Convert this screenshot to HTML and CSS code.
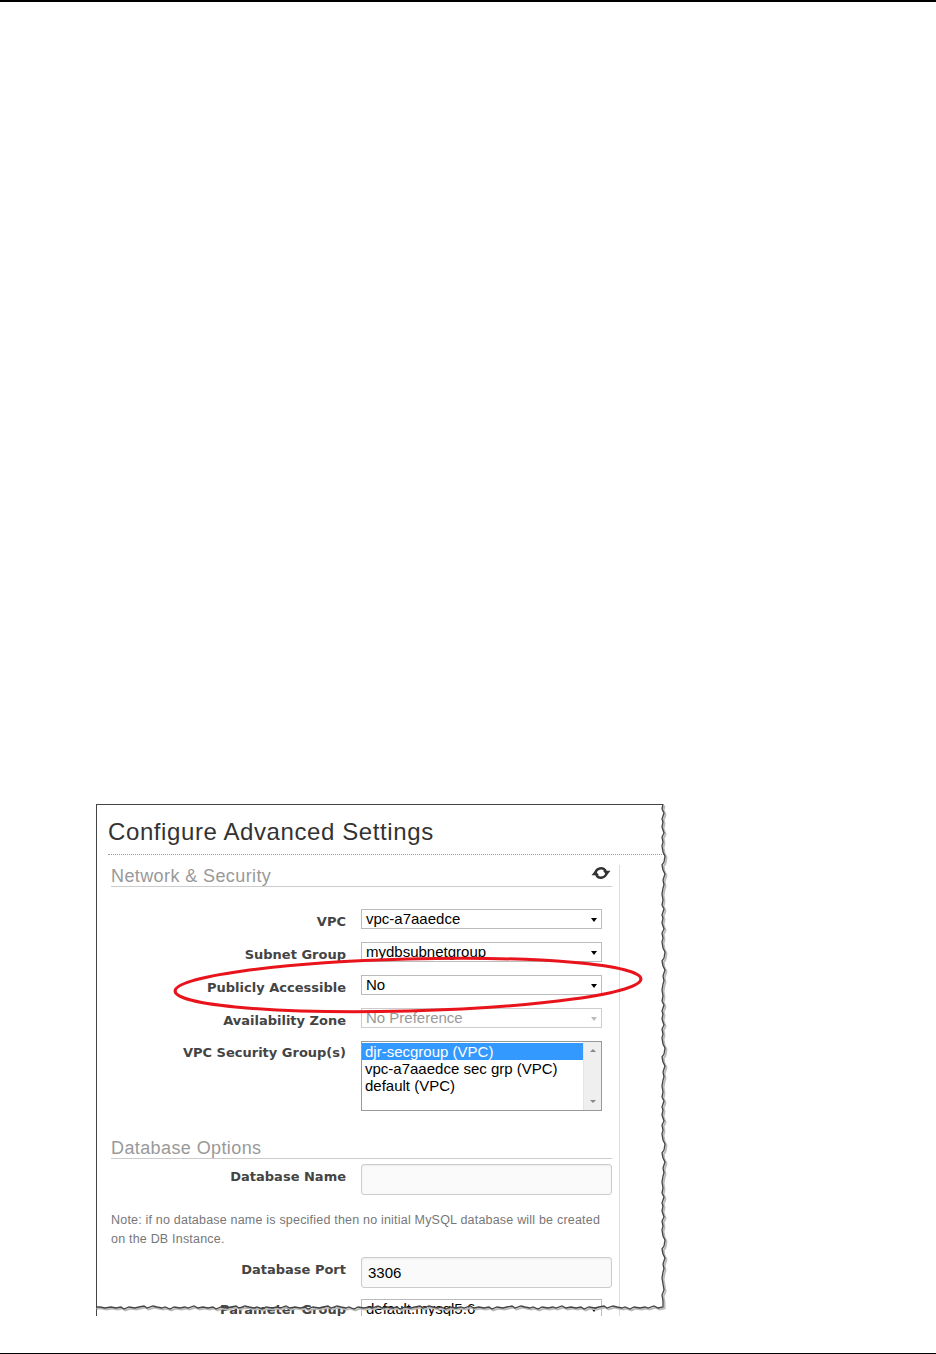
FILE: index.html
```html
<!DOCTYPE html>
<html lang="en">
<head>
    <meta charset="UTF-8">
    <meta name="viewport" content="width=device-width, initial-scale=1.0">
    <title>Configure Advanced Settings</title>
    <link rel="stylesheet" href="styles.css">
</head>
<body>
    <div class="page">
        <div class="rule rule-top"></div>

        <!-- screenshot of the console form -->
        <div class="shot">
            <div class="frame">
                <h1 class="frame-title">Configure Advanced Settings</h1>

                <div class="panel">
                    <div class="section-head">
                        <span>Network &amp; Security</span>
                        <svg class="refresh" viewBox="0 0 20 14">
                            <path d="M4.5 7.5 A5.5 5.5 0 0 1 14.8 5.2" fill="none" stroke="#333" stroke-width="2.4"/>
                            <polygon points="12,4.8 19.5,4.8 15.7,9.6" fill="#333"/>
                            <path d="M15.5 6.5 A5.5 5.5 0 0 1 5.2 8.8" fill="none" stroke="#333" stroke-width="2.4"/>
                            <polygon points="0.5,9.2 8,9.2 4.3,4.4" fill="#333"/>
                        </svg>
                    </div>

                    <div class="form-row first">
                        <label class="field-label">VPC</label>
                        <div class="select"><span>vpc-a7aaedce</span><i class="caret"></i></div>
                    </div>
                    <div class="form-row">
                        <label class="field-label">Subnet Group</label>
                        <div class="select"><span>mydbsubnetgroup</span><i class="caret"></i></div>
                    </div>
                    <div class="form-row">
                        <label class="field-label">Publicly Accessible</label>
                        <div class="select"><span>No</span><i class="caret"></i></div>
                    </div>
                    <div class="form-row">
                        <label class="field-label">Availability Zone</label>
                        <div class="select disabled"><span>No Preference</span><i class="caret"></i></div>
                    </div>
                    <div class="form-row">
                        <label class="field-label list-label">VPC Security Group(s)</label>
                        <div class="listbox">
                            <ul class="options">
                                <li class="selected">djr-secgroup (VPC)</li>
                                <li>vpc-a7aaedce sec grp (VPC)</li>
                                <li>default (VPC)</li>
                            </ul>
                            <div class="scrollbar">
                                <i class="scroll-up"></i>
                                <i class="scroll-down"></i>
                            </div>
                        </div>
                    </div>

                    <div class="section-head db-head">
                        <span>Database Options</span>
                    </div>

                    <div class="form-row name-row">
                        <label class="field-label">Database Name</label>
                        <div class="text-input"></div>
                    </div>
                    <p class="note">Note: if no database name is specified then no initial MySQL database will be created<br>on the DB Instance.</p>
                    <div class="form-row port-row">
                        <label class="field-label">Database Port</label>
                        <div class="text-input">3306</div>
                    </div>
                    <div class="form-row param-row">
                        <label class="field-label param-label">Parameter Group</label>
                        <div class="select"><span>default.mysql5.6</span><i class="caret"></i></div>
                    </div>
                </div>
            </div>

            <!-- torn edge and red highlight drawn over the screenshot -->
            <svg class="overlay" viewBox="0 0 576 512">
                <path class="tear-mask" d="M567 -2 L567 0 l-1 5 2 4 -2 6 1 3 -1 5 2 6 -2 4 1 5 -1 4 1 6 2 4 -1 6 -2 3 1 5 2 4 -2 6 1 5 -1 3 -1 6 1 6 -1 5 2 4 -2 6 1 3 -1 5 2 6 -2 4 1 5 -1 4 1 6 2 4 -1 6 -2 3 1 5 2 4 -2 6 1 5 -1 3 -1 6 1 6 -1 5 2 4 -2 6 1 3 -1 5 2 6 -2 4 1 5 -1 4 1 6 2 4 -1 6 -2 3 1 5 2 4 -2 6 1 5 -1 3 -1 6 1 6 -1 5 2 4 -2 6 1 3 -1 5 2 6 -2 4 1 5 -1 4 1 6 2 4 -1 6 -2 3 1 5 2 4 -2 6 1 5 -1 3 -1 6 1 6 -1 5 2 4 -2 6 1 3 -1 5 2 6 -2 4 1 5 -1 4 1 6 2 4 -1 6 -2 3 1 5 2 4 -2 6 1 5 -1 3 -1 6 1 6 -1 5 2 4 -2 6 1 3 -1 5 2 6 -2 4 1 5 -1 4 1 6 2 4 -1 6 -2 3 1 5 2 4 -2 6 1 5 -1 3 -1 6 1 6 1 6 -2 5 1 6 0 6 -5 1 -4 -2 -6 2 -3 -1 -5 1 -6 -1 -4 2 -5 -2 -3 1 -5 -1 -4 -1 -6 2 -3 -2 -5 1 -4 1 -6 -1 -5 2 -3 -2 -5 1 -5 -1 -5 1 -4 -2 -6 2 -3 -1 -5 1 -6 -1 -4 2 -5 -2 -3 1 -5 -1 -4 -1 -6 2 -3 -2 -5 1 -4 1 -6 -1 -5 2 -3 -2 -5 1 -5 -1 -5 1 -4 -2 -6 2 -3 -1 -5 1 -6 -1 -4 2 -5 -2 -3 1 -5 -1 -4 -1 -6 2 -3 -2 -5 1 -4 1 -6 -1 -5 2 -3 -2 -5 1 -5 -1 -5 1 -4 -2 -6 2 -3 -1 -5 1 -6 -1 -4 2 -5 -2 -3 1 -5 -1 -4 -1 -6 2 -3 -2 -5 1 -4 1 -6 -1 -5 2 -3 -2 -5 1 -5 -1 -5 1 -4 -2 -6 2 -3 -1 -5 1 -6 -1 -4 2 -5 -2 -3 1 -5 -1 -4 -1 -6 2 -3 -2 -5 1 -4 1 -6 -1 -5 2 -3 -2 -5 1 -5 -1 -5 1 -4 -2 -6 2 -3 -1 -5 1 -6 -1 -4 2 -5 -2 -3 1 -5 -1 -4 -1 -6 2 -3 -2 -5 1 -4 1 -6 -1 -5 2 -3 -2 -5 1 -5 -1 -6 1 -5 -1 -5 0 L-2 520 L590 520 L590 -2 Z"/>
                <path class="tear-shadow" d="M567 0 l-1 5 2 4 -2 6 1 3 -1 5 2 6 -2 4 1 5 -1 4 1 6 2 4 -1 6 -2 3 1 5 2 4 -2 6 1 5 -1 3 -1 6 1 6 -1 5 2 4 -2 6 1 3 -1 5 2 6 -2 4 1 5 -1 4 1 6 2 4 -1 6 -2 3 1 5 2 4 -2 6 1 5 -1 3 -1 6 1 6 -1 5 2 4 -2 6 1 3 -1 5 2 6 -2 4 1 5 -1 4 1 6 2 4 -1 6 -2 3 1 5 2 4 -2 6 1 5 -1 3 -1 6 1 6 -1 5 2 4 -2 6 1 3 -1 5 2 6 -2 4 1 5 -1 4 1 6 2 4 -1 6 -2 3 1 5 2 4 -2 6 1 5 -1 3 -1 6 1 6 -1 5 2 4 -2 6 1 3 -1 5 2 6 -2 4 1 5 -1 4 1 6 2 4 -1 6 -2 3 1 5 2 4 -2 6 1 5 -1 3 -1 6 1 6 1 6 -2 5 1 6 0 6 -5 1 -4 -2 -6 2 -3 -1 -5 1 -6 -1 -4 2 -5 -2 -3 1 -5 -1 -4 -1 -6 2 -3 -2 -5 1 -4 1 -6 -1 -5 2 -3 -2 -5 1 -5 -1 -5 1 -4 -2 -6 2 -3 -1 -5 1 -6 -1 -4 2 -5 -2 -3 1 -5 -1 -4 -1 -6 2 -3 -2 -5 1 -4 1 -6 -1 -5 2 -3 -2 -5 1 -5 -1 -5 1 -4 -2 -6 2 -3 -1 -5 1 -6 -1 -4 2 -5 -2 -3 1 -5 -1 -4 -1 -6 2 -3 -2 -5 1 -4 1 -6 -1 -5 2 -3 -2 -5 1 -5 -1 -5 1 -4 -2 -6 2 -3 -1 -5 1 -6 -1 -4 2 -5 -2 -3 1 -5 -1 -4 -1 -6 2 -3 -2 -5 1 -4 1 -6 -1 -5 2 -3 -2 -5 1 -5 -1 -5 1 -4 -2 -6 2 -3 -1 -5 1 -6 -1 -4 2 -5 -2 -3 1 -5 -1 -4 -1 -6 2 -3 -2 -5 1 -4 1 -6 -1 -5 2 -3 -2 -5 1 -5 -1 -5 1 -4 -2 -6 2 -3 -1 -5 1 -6 -1 -4 2 -5 -2 -3 1 -5 -1 -4 -1 -6 2 -3 -2 -5 1 -4 1 -6 -1 -5 2 -3 -2 -5 1 -5 -1 -6 1 -5 -1 -5 0"/>
                <path class="tear-line" d="M567 0 l-1 5 2 4 -2 6 1 3 -1 5 2 6 -2 4 1 5 -1 4 1 6 2 4 -1 6 -2 3 1 5 2 4 -2 6 1 5 -1 3 -1 6 1 6 -1 5 2 4 -2 6 1 3 -1 5 2 6 -2 4 1 5 -1 4 1 6 2 4 -1 6 -2 3 1 5 2 4 -2 6 1 5 -1 3 -1 6 1 6 -1 5 2 4 -2 6 1 3 -1 5 2 6 -2 4 1 5 -1 4 1 6 2 4 -1 6 -2 3 1 5 2 4 -2 6 1 5 -1 3 -1 6 1 6 -1 5 2 4 -2 6 1 3 -1 5 2 6 -2 4 1 5 -1 4 1 6 2 4 -1 6 -2 3 1 5 2 4 -2 6 1 5 -1 3 -1 6 1 6 -1 5 2 4 -2 6 1 3 -1 5 2 6 -2 4 1 5 -1 4 1 6 2 4 -1 6 -2 3 1 5 2 4 -2 6 1 5 -1 3 -1 6 1 6 1 6 -2 5 1 6 0 6 -5 1 -4 -2 -6 2 -3 -1 -5 1 -6 -1 -4 2 -5 -2 -3 1 -5 -1 -4 -1 -6 2 -3 -2 -5 1 -4 1 -6 -1 -5 2 -3 -2 -5 1 -5 -1 -5 1 -4 -2 -6 2 -3 -1 -5 1 -6 -1 -4 2 -5 -2 -3 1 -5 -1 -4 -1 -6 2 -3 -2 -5 1 -4 1 -6 -1 -5 2 -3 -2 -5 1 -5 -1 -5 1 -4 -2 -6 2 -3 -1 -5 1 -6 -1 -4 2 -5 -2 -3 1 -5 -1 -4 -1 -6 2 -3 -2 -5 1 -4 1 -6 -1 -5 2 -3 -2 -5 1 -5 -1 -5 1 -4 -2 -6 2 -3 -1 -5 1 -6 -1 -4 2 -5 -2 -3 1 -5 -1 -4 -1 -6 2 -3 -2 -5 1 -4 1 -6 -1 -5 2 -3 -2 -5 1 -5 -1 -5 1 -4 -2 -6 2 -3 -1 -5 1 -6 -1 -4 2 -5 -2 -3 1 -5 -1 -4 -1 -6 2 -3 -2 -5 1 -4 1 -6 -1 -5 2 -3 -2 -5 1 -5 -1 -5 1 -4 -2 -6 2 -3 -1 -5 1 -6 -1 -4 2 -5 -2 -3 1 -5 -1 -4 -1 -6 2 -3 -2 -5 1 -4 1 -6 -1 -5 2 -3 -2 -5 1 -5 -1 -6 1 -5 -1 -5 0"/>
                <ellipse class="highlight" cx="312" cy="181" rx="233" ry="26" transform="rotate(-1.5 312 181)"/>
            </svg>
        </div>

        <div class="rule rule-bottom"></div>
    </div>
</body>
</html>
```

FILE: styles.css
```css
body {
    margin: 0;
    background-color: #fff;
    font-family: "Liberation Sans", Arial, sans-serif;
}

.page {
    height: 1354px;
    display: flex;
    flex-direction: column;
}

.rule {
    background-color: #000;
}

.rule-top {
    height: 2px;
}

.rule-bottom {
    height: 1px;
    margin-top: auto;
}

/* screenshot box */
.shot {
    position: relative;
    width: 576px;
    height: 512px;
    margin: 802px 0 0 96px;
    overflow: hidden;
}

.frame {
    box-sizing: border-box;
    height: 100%;
    border-left: 1px solid #444;
    border-top: 1px solid #444;
    background-color: #fff;
    display: flex;
    flex-direction: column;
}

.frame-title {
    margin: 0 0 0 11px;
    padding: 13px 0 8px;
    border-bottom: 1px dotted #999;
    font-size: 24px;
    line-height: 28px;
    font-weight: normal;
    letter-spacing: 0.6px;
    color: #333;
}

.panel {
    box-sizing: border-box;
    width: 512px;
    flex: 1;
    margin: 10px 0 0 11px;
    padding: 1px 7px 0 3px;
    border-right: 1px solid #ddd;
}

.section-head {
    display: flex;
    justify-content: space-between;
    align-items: flex-start;
    font-size: 18px;
    line-height: 20px;
    letter-spacing: 0.4px;
    color: #999;
    border-bottom: 1px solid #ccc;
}

.refresh {
    width: 20px;
    height: 14px;
    margin-right: 1px;
}

.db-head {
    margin-top: 27px;
}

/* form rows */
.form-row {
    display: flex;
    margin-top: 13px;
}

.form-row.first {
    margin-top: 22px;
}

.form-row.name-row {
    margin-top: 5px;
}

.form-row.port-row {
    margin-top: 9px;
}

.form-row.param-row {
    margin-top: 11px;
}

.field-label {
    box-sizing: border-box;
    width: 235px;
    height: 20px;
    margin-right: 15px;
    padding-top: 5px;
    text-align: right;
    font-family: "DejaVu Sans", Verdana, sans-serif;
    font-weight: bold;
    font-size: 13px;
    line-height: 15px;
    color: #444;
}

.field-label.list-label {
    padding-top: 4px;
}

.field-label.param-label {
    padding-top: 3px;
}

.select {
    box-sizing: border-box;
    width: 241px;
    height: 20px;
    padding-left: 4px;
    border: 1px solid #bbb;
    background-color: #fff;
    display: flex;
    align-items: center;
    justify-content: space-between;
    font-size: 15px;
    line-height: 18px;
    color: #000;
}

.caret {
    width: 0;
    height: 0;
    margin: 2px 4px 0 0;
    border-left: 3.5px solid transparent;
    border-right: 3.5px solid transparent;
    border-top: 4px solid #000;
}

.select.disabled {
    color: #999;
    border-color: #ccc;
}

.select.disabled .caret {
    border-top-color: #bbb;
}

/* multi select list */
.listbox {
    box-sizing: border-box;
    width: 241px;
    height: 70px;
    border: 1px solid #999;
    display: flex;
}

.options {
    list-style: none;
    flex: 1;
    margin: 0;
    padding: 1px 0 0;
    font-size: 15px;
    line-height: 17px;
    color: #000;
}

.options li {
    padding-left: 3px;
    white-space: nowrap;
}

.options .selected {
    background-color: #3399ff;
    color: #fff;
}

.scrollbar {
    box-sizing: border-box;
    width: 18px;
    padding: 7px 0;
    background-color: #efefef;
    border-left: 1px solid #e4e4e4;
    display: flex;
    flex-direction: column;
    justify-content: space-between;
    align-items: center;
}

.scroll-up,
.scroll-down {
    width: 0;
    height: 0;
    border-left: 3px solid transparent;
    border-right: 3px solid transparent;
}

.scroll-up {
    border-bottom: 3px solid #888;
}

.scroll-down {
    border-top: 3px solid #888;
}

.text-input {
    box-sizing: border-box;
    width: 251px;
    height: 31px;
    padding-left: 6px;
    border: 1px solid #ccc;
    border-radius: 3px;
    background-color: #fafafa;
    box-shadow: inset 0 1px 2px rgba(0,0,0,0.06);
    font-size: 15px;
    line-height: 29px;
    color: #000;
}

.note {
    margin: 16px 0 0;
    font-size: 12.5px;
    line-height: 18.5px;
    letter-spacing: 0.2px;
    color: #777;
}

/* torn edge + highlight */
.overlay {
    position: absolute;
    top: 0;
    left: 0;
    width: 576px;
    height: 512px;
    pointer-events: none;
}

.tear-mask {
    fill: #fff;
}

.tear-shadow {
    fill: none;
    stroke: #bbb;
    stroke-width: 2;
    transform: translate(1.5px, 1.5px);
}

.tear-line {
    fill: none;
    stroke: #444;
    stroke-width: 1.3;
}

.highlight {
    fill: none;
    stroke: #e8131b;
    stroke-width: 3;
}
```
